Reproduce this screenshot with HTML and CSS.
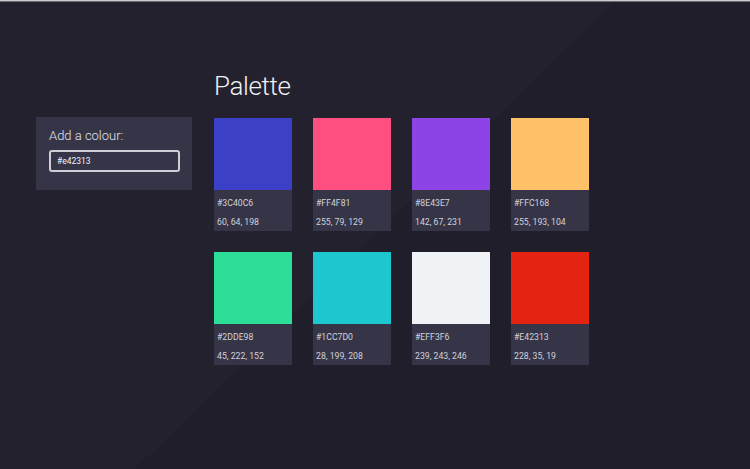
FILE: index.html
```html
<!DOCTYPE html>
<html lang="en">
<head>
<meta charset="utf-8">
<title>Palette</title>
<link rel="stylesheet" href="styles.css">
</head>
<body>
<div class="topline"></div>
<main class="app">
  <aside class="add-card">
    <label class="add-title" for="colour">Add a colour:</label>
    <input id="colour" class="add-input" type="text" value="#e42313">
  </aside>
  <section class="palette">
    <h1 class="palette-title">Palette</h1>
    <div class="grid">
      <div class="swatch"><div class="chip" style="background:#3C40C6"></div><div class="info"><span>#3C40C6</span><span>60, 64, 198</span></div></div>
      <div class="swatch"><div class="chip" style="background:#FF4F81"></div><div class="info"><span>#FF4F81</span><span>255, 79, 129</span></div></div>
      <div class="swatch"><div class="chip" style="background:#8E43E7"></div><div class="info"><span>#8E43E7</span><span>142, 67, 231</span></div></div>
      <div class="swatch"><div class="chip" style="background:#FFC168"></div><div class="info"><span>#FFC168</span><span>255, 193, 104</span></div></div>
      <div class="swatch"><div class="chip" style="background:#2DDE98"></div><div class="info"><span>#2DDE98</span><span>45, 222, 152</span></div></div>
      <div class="swatch"><div class="chip" style="background:#1CC7D0"></div><div class="info"><span>#1CC7D0</span><span>28, 199, 208</span></div></div>
      <div class="swatch"><div class="chip" style="background:#EFF3F6"></div><div class="info"><span>#EFF3F6</span><span>239, 243, 246</span></div></div>
      <div class="swatch"><div class="chip" style="background:#E42313"></div><div class="info"><span>#E42313</span><span>228, 35, 19</span></div></div>
    </div>
  </section>
</main>
</body>
</html>
```

FILE: styles.css
```css
* { box-sizing: border-box; }

html, body {
  margin: 0;
  height: 100%;
}

body {
  font-family: Roboto, "Liberation Sans", sans-serif;
  background: linear-gradient(135.7deg, #23212e 50%, #201e2a 50%);
  color: #e8e8ee;
  overflow: hidden;
}

.topline {
  height: 2px;
  background: linear-gradient(#c9c9cd 0 1px, #6e6d75 1px 2px);
}

.app {
  display: flex;
  align-items: flex-start;
  gap: 22px;
  padding: 68px 36px 0 36px;
}

.add-card {
  margin-top: 47px;
  width: 156px;
  background: #363548;
  padding: 11px 12px 18px 13px;
  display: flex;
  flex-direction: column;
  gap: 6px;
}

.add-title {
  font-size: 13px;
  line-height: 16px;
  font-weight: 300;
  color: #e2e2ea;
}

.add-input {
  width: 131px;
  height: 22px;
  border: 2px solid #cfcfd7;
  border-radius: 3px;
  background: transparent;
  color: #f4f4f8;
  font-family: Roboto, "Liberation Sans", sans-serif;
  font-size: 8.5px;
  padding: 0 6px;
  outline: none;
}

.palette-title {
  margin: 0 0 16px 0;
  font-size: 26px;
  line-height: 32px;
  font-weight: 300;
  color: #efeff4;
  letter-spacing: -0.4px;
}

.grid {
  display: grid;
  grid-template-columns: repeat(4, 78px);
  gap: 21px;
}

.swatch {
  display: flex;
  flex-direction: column;
}

.chip {
  height: 72px;
}

.info {
  height: 41px;
  background: #363548;
  padding: 8px 3px 0 3px;
  display: flex;
  flex-direction: column;
  gap: 9px;
  font-size: 8.7px;
  line-height: 10px;
  color: #d2d2da;
}
```
